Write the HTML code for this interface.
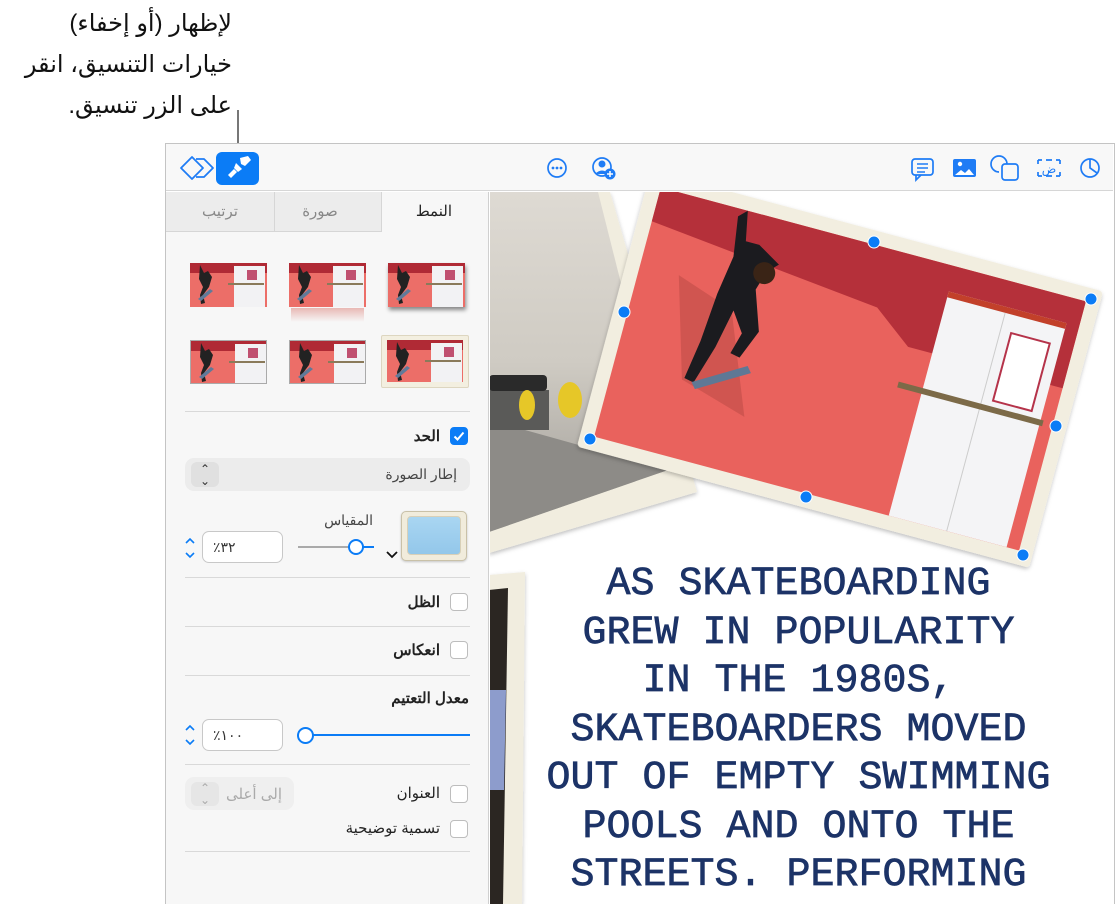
<!DOCTYPE html>
<html><head><meta charset="utf-8"><style>
*{margin:0;padding:0;box-sizing:border-box}
body{width:1115px;height:904px;background:#fff;position:relative;overflow:hidden;font-family:"Liberation Sans","Noto Sans CJK SC",sans-serif}
.abs{position:absolute}
.ar{direction:rtl;font-family:"Liberation Sans","Noto Sans CJK SC","DejaVu Sans",sans-serif}
.note{right:883px;top:3px;font-size:24px;line-height:41px;color:#111;text-align:right;white-space:nowrap}
.hr{position:absolute;left:185px;width:285px;height:1px;background:#d9d9d9}
.cb{position:absolute;width:18px;height:18px;border:1px solid #bdbdbd;border-radius:4px;background:#fff}
.lbl{position:absolute;font-size:14px;color:#222;direction:rtl;text-align:right;white-space:nowrap}
.field{position:absolute;background:#fff;border:1px solid #c8c8c8;border-radius:7px;font-size:14px;color:#333;padding:7px 0 0 10px}
.thumb{position:absolute;width:77px;height:44px;overflow:hidden}
</style></head><body>

<div class="abs ar note">لإظهار (أو إخفاء)<br>خيارات التنسيق، انقر<br>على الزر تنسيق.</div>
<div class="abs" style="left:237px;top:110px;width:2px;height:42px;background:#777"></div>

<div class="abs" style="left:165px;top:143px;width:950px;height:761px;border-left:1px solid #c4c4c4;border-top:1px solid #c4c4c4;border-right:1px solid #c4c4c4"></div>
<div class="abs" style="left:166px;top:144px;width:947px;height:47px;background:#f8f8f8;border-bottom:1px solid #d6d6d6"></div>

<svg class="abs" style="left:166px;top:144px" width="947" height="47" viewBox="166 144 947 47">
 <g fill="none" stroke="#1f7cf5" stroke-width="1.8" stroke-linejoin="round">
  <path d="M181 168 L192 157 L203 168 L192 179 Z"/>
  <path d="M196 159 L204 159 L213 168 L204 177 L196 177"/>
 </g>
 <rect x="216" y="152" width="43" height="33" rx="6" fill="#0b7cf6"/>
 <g fill="#fff">
  <path d="M240 158 l8 -2 l3 4 l-6 6 l-4 -2 z"/>
  <path d="M236 163 l6 6 l-4 3 l-4 -4 z"/>
  <path d="M234 169 l3 3 l-6 6 l-3 -3 z"/>
 </g>
 <g fill="none" stroke="#1f7cf5" stroke-width="1.7">
  <circle cx="557" cy="168" r="9"/>
  <circle cx="602" cy="167" r="9"/>
  <rect x="912" y="159" width="21" height="16" rx="3"/>
  <path d="M916 175 l0 5 l5 -5" />
  <path d="M917 164h11M917 168h11M917 172h8" stroke-width="1.4"/>
  <path d="M999 172 a8 8 0 1 1 8 -8" />
  <rect x="1002" y="164" width="16" height="16" rx="3"/>
  <path d="M1038 160h4M1046 160h6M1056 160h4M1038 176h4M1046 176h6M1056 176h4M1038 160v4M1060 160v4M1038 172v4M1060 172v4" />
  <circle cx="1090" cy="168" r="9"/>
  <path d="M1090 159 v9 l7 5" />
 </g>
 <g fill="#1f7cf5">
  <circle cx="553" cy="168" r="1.4"/><circle cx="557" cy="168" r="1.4"/><circle cx="561" cy="168" r="1.4"/>
  <circle cx="602" cy="164" r="3.5"/><path d="M595 174 q7 -7 14 0 z"/>
  <circle cx="610" cy="174" r="5.5"/>
  <rect x="953" y="159" width="23" height="18" rx="2"/>
 </g>
 <path d="M610 171v6M607 174h6" stroke="#fff" stroke-width="1.5"/>
 <circle cx="960" cy="164" r="2.2" fill="#fff"/>
 <path d="M955 175 l6 -5 l4 3 l4 -4 l5 6 z" fill="#fff"/>
 <text x="1049" y="173" font-size="12" fill="#1f7cf5" text-anchor="middle" font-family="DejaVu Sans">ض</text>
</svg>

<div class="abs" style="left:166px;top:192px;width:323px;height:712px;background:#f7f7f7;border-right:1px solid #d0d0d0"></div>
<div class="abs" style="left:166px;top:192px;width:215px;height:40px;background:#ececec;border-bottom:1px solid #d6d6d6"></div>
<div class="abs" style="left:274px;top:192px;width:1px;height:40px;background:#d6d6d6"></div>
<div class="abs" style="left:381px;top:192px;width:1px;height:40px;background:#d6d6d6"></div>
<div class="lbl" style="left:380px;width:72px;top:202px;font-size:15px">النمط</div>
<div class="lbl" style="left:290px;width:60px;top:202px;font-size:15px;color:#888;text-align:center">صورة</div>
<div class="lbl" style="left:190px;width:60px;top:202px;font-size:15px;color:#888;text-align:center">ترتيب</div>

<svg width="0" height="0" style="position:absolute"><defs>
<g id="th">
 <rect width="77" height="44" fill="#ec6e68"/>
 <rect width="77" height="10" fill="#b02a35"/>
 <rect x="44" y="3" width="31" height="41" fill="#f2f2f4"/>
 <rect x="57" y="7" width="10" height="10" fill="#c05070"/>
 <rect x="38" y="20" width="36" height="2" fill="#8a7a5a"/>
 <path d="M10 2 l4 8 l4 -2 l4 6 l-3 10 l-6 8 l2 8 l-4 1 l-1 -9 l3 -8 l-4 -8 z" fill="#222"/>
 <path d="M8 36 l12 -10 l3 2 l-12 10 z" fill="#607a99"/>
</g></defs></svg>
<svg class="thumb" style="left:190px;top:263px"><use href="#th"/></svg>
<svg class="thumb" style="left:289px;top:263px"><use href="#th"/></svg>
<div class="abs" style="left:291px;top:308px;width:73px;height:14px;background:linear-gradient(#e8b8b4,rgba(247,247,247,0))"></div>
<svg class="thumb" style="left:388px;top:263px;box-shadow:1px 3px 4px rgba(0,0,0,.45)"><use href="#th"/></svg>
<svg class="thumb" style="left:190px;top:340px;border:1px solid #aaa"><use href="#th"/></svg>
<svg class="thumb" style="left:289px;top:340px;border:1px solid #aaa"><use href="#th"/></svg>
<div class="abs" style="left:381px;top:335px;width:88px;height:53px;background:#f3efe0;border:1px solid #ddd6c0;border-radius:2px"></div>
<svg class="thumb" style="left:387px;top:340px;width:76px;height:42px"><use href="#th"/></svg>

<div class="hr" style="top:411px"></div>
<div class="cb" style="left:450px;top:427px;background:#0b7cf6;border-color:#0b7cf6"></div>
<svg class="abs" style="left:450px;top:427px" width="18" height="18"><path d="M4.5 9.5l3 3 6-7" stroke="#fff" stroke-width="2" fill="none"/></svg>
<div class="lbl" style="right:675px;top:427px;font-weight:bold;font-size:15px">الحد</div>

<div class="abs" style="left:185px;top:458px;width:285px;height:33px;background:#ececec;border-radius:9px"></div>
<div class="abs" style="left:191px;top:462px;width:28px;height:25px;background:#e0e0e0;border-radius:6px;font-size:12px;text-align:center;line-height:12px;color:#333;padding-top:1px">⌃<br>⌄</div>
<div class="lbl" style="right:658px;top:466px;color:#444">إطار الصورة</div>

<div class="abs" style="left:401px;top:511px;width:66px;height:50px;background:#f1ecdc;border:1px solid #c9c1a8;border-radius:5px;box-shadow:0 1px 2px rgba(0,0,0,.2)"></div>
<div class="abs" style="left:407px;top:516px;width:54px;height:39px;background:linear-gradient(#a9d6f2,#93c7ea);border-radius:4px;border:1px solid #d8d0b8"></div>
<svg class="abs" style="left:385px;top:550px" width="14" height="10"><path d="M2 2l5 5 5-5" stroke="#111" stroke-width="1.8" fill="none"/></svg>
<div class="lbl" style="right:742px;top:512px;color:#444">المقياس</div>
<div class="abs" style="left:298px;top:546px;width:58px;height:2px;background:#aaa"></div>
<div class="abs" style="left:356px;top:546px;width:18px;height:2px;background:#0b7cf6"></div>
<div class="abs" style="left:348px;top:539px;width:16px;height:16px;border-radius:50%;background:#fff;border:2.5px solid #0b7cf6"></div>
<div class="field" style="left:202px;top:531px;width:81px;height:32px">٪٣٢</div>
<svg class="abs" style="left:183px;top:536px" width="14" height="24"><path d="M3 7l4-4 4 4M3 17l4 4 4-4" stroke="#0b7cf6" stroke-width="1.6" fill="none"/></svg>

<div class="hr" style="top:577px"></div>
<div class="cb" style="left:450px;top:593px"></div>
<div class="lbl" style="right:675px;top:593px;font-weight:bold;font-size:15px">الظل</div>
<div class="hr" style="top:626px"></div>
<div class="cb" style="left:450px;top:641px"></div>
<div class="lbl" style="right:675px;top:641px;font-weight:bold;font-size:15px">انعكاس</div>
<div class="hr" style="top:675px"></div>
<div class="lbl" style="right:646px;top:689px;font-weight:bold;font-size:15px">معدل التعتيم</div>
<div class="abs" style="left:306px;top:734px;width:164px;height:2px;background:#0b7cf6"></div>
<div class="abs" style="left:297px;top:727px;width:17px;height:17px;border-radius:50%;background:#fff;border:2.5px solid #0b7cf6"></div>
<div class="field" style="left:202px;top:719px;width:81px;height:32px">٪١٠٠</div>
<svg class="abs" style="left:183px;top:723px" width="14" height="24"><path d="M3 7l4-4 4 4M3 17l4 4 4-4" stroke="#0b7cf6" stroke-width="1.6" fill="none"/></svg>
<div class="hr" style="top:764px"></div>
<div class="cb" style="left:450px;top:785px"></div>
<div class="lbl" style="right:675px;top:784px;font-size:15px">العنوان</div>
<div class="abs" style="left:185px;top:777px;width:109px;height:33px;background:#efefef;border-radius:9px"></div>
<div class="abs" style="left:191px;top:782px;width:28px;height:24px;background:#e6e6e6;border-radius:6px;font-size:12px;text-align:center;line-height:12px;color:#aaa">⌃<br>⌄</div>
<div class="lbl" style="right:833px;top:785px;color:#aaa;font-size:15px">إلى أعلى</div>
<div class="cb" style="left:450px;top:820px"></div>
<div class="lbl" style="right:675px;top:819px;font-size:15px">تسمية توضيحية</div>
<div class="hr" style="top:851px"></div>

<svg class="abs" style="left:490px;top:192px" width="623" height="712" viewBox="490 192 623 712">
 <defs>
  <linearGradient id="gy" x1="0" y1="0" x2="0" y2="1"><stop offset="0" stop-color="#dedad3"/><stop offset="0.5" stop-color="#cfcbc3"/><stop offset="1" stop-color="#9d9a95"/></linearGradient>
  <filter id="sh"><feDropShadow dx="0" dy="2" stdDeviation="2" flood-opacity="0.25"/></filter>
 </defs>
 <polygon points="489,192 610,192 697,492 489,553" fill="#f1eddf" filter="url(#sh)"/>
 <polygon points="489,192 598,192 668,470 489,532" fill="url(#gy)"/>
 <polygon points="489,420 668,470 489,532" fill="#8d8b87"/>
 <rect x="489" y="390" width="60" height="40" fill="#5a5a58"/>
 <rect x="489" y="375" width="58" height="16" rx="4" fill="#2a2a2a"/>
 <ellipse cx="570" cy="400" rx="12" ry="18" fill="#e6c728"/>
 <ellipse cx="527" cy="405" rx="8" ry="15" fill="#e6c728"/>
 <polygon points="489,575 525,572 522,904 489,904" fill="#f1eddf" filter="url(#sh)"/>
 <polygon points="489,590 508,588 503,904 489,904" fill="#2b2622"/>
 <polygon points="489,690 506,690 504,790 489,790" fill="#8d9ccc"/>
 <g transform="rotate(15 840 369)">
  <rect x="606" y="226" width="468" height="286" rx="4" fill="#f2eee0" filter="url(#sh)"/>
  <rect x="620" y="240" width="440" height="258" fill="#e9625d"/>
  <polygon points="620,240 1060,240 1060,330 900,330 860,300 620,275" fill="#b5303a"/>
  <rect x="925" y="266" width="122" height="232" fill="#f4f4f6"/>
  <rect x="925" y="266" width="122" height="6" fill="#c2402a"/>
  <line x1="985" y1="272" x2="985" y2="498" stroke="#ccc"/>
  <rect x="996" y="290" width="40" height="70" fill="#fff" stroke="#b5334a" stroke-width="2"/>
  <rect x="900" y="366" width="150" height="6" fill="#7c6a48"/>
  <path d="M660 320 l60 20 l40 100 l-70 -20 z" fill="#b84844" opacity="0.5"/>
  <path d="M702 248 l6 40 l-6 40 l-4 50 l-6 40 l10 2 l12 -40 l8 -40 l14 20 l-6 22 l10 2 l12 -30 l-14 -40 l6 -20 l10 -10 l-24 -14 l-14 0 l-6 -30 z" fill="#1b1b1f"/>
  <circle cx="742" cy="296" r="11" fill="#3a2416"/>
  <path d="M700 420 l50 -30 l5 6 l-50 30 z" fill="#5f7895"/>
 </g>
 <g fill="#0b7cf6" stroke="#fff" stroke-width="1">
  <circle cx="874" cy="242" r="6"/><circle cx="1091" cy="299" r="6"/><circle cx="1056" cy="426" r="6"/>
  <circle cx="1023" cy="555" r="6"/><circle cx="806" cy="497" r="6"/><circle cx="590" cy="439" r="6"/><circle cx="624" cy="312" r="6"/>
 </g>
</svg>

<div class="abs" style="left:500px;top:561px;width:597px;text-align:center;font-family:'Liberation Mono',monospace;font-size:40px;line-height:48.5px;color:#1c3367;white-space:pre;-webkit-text-stroke:0.7px #1c3367">AS SKATEBOARDING
GREW IN POPULARITY
IN THE 1980S,
SKATEBOARDERS MOVED
OUT OF EMPTY SWIMMING
POOLS AND ONTO THE
STREETS. PERFORMING</div>
</body></html>
